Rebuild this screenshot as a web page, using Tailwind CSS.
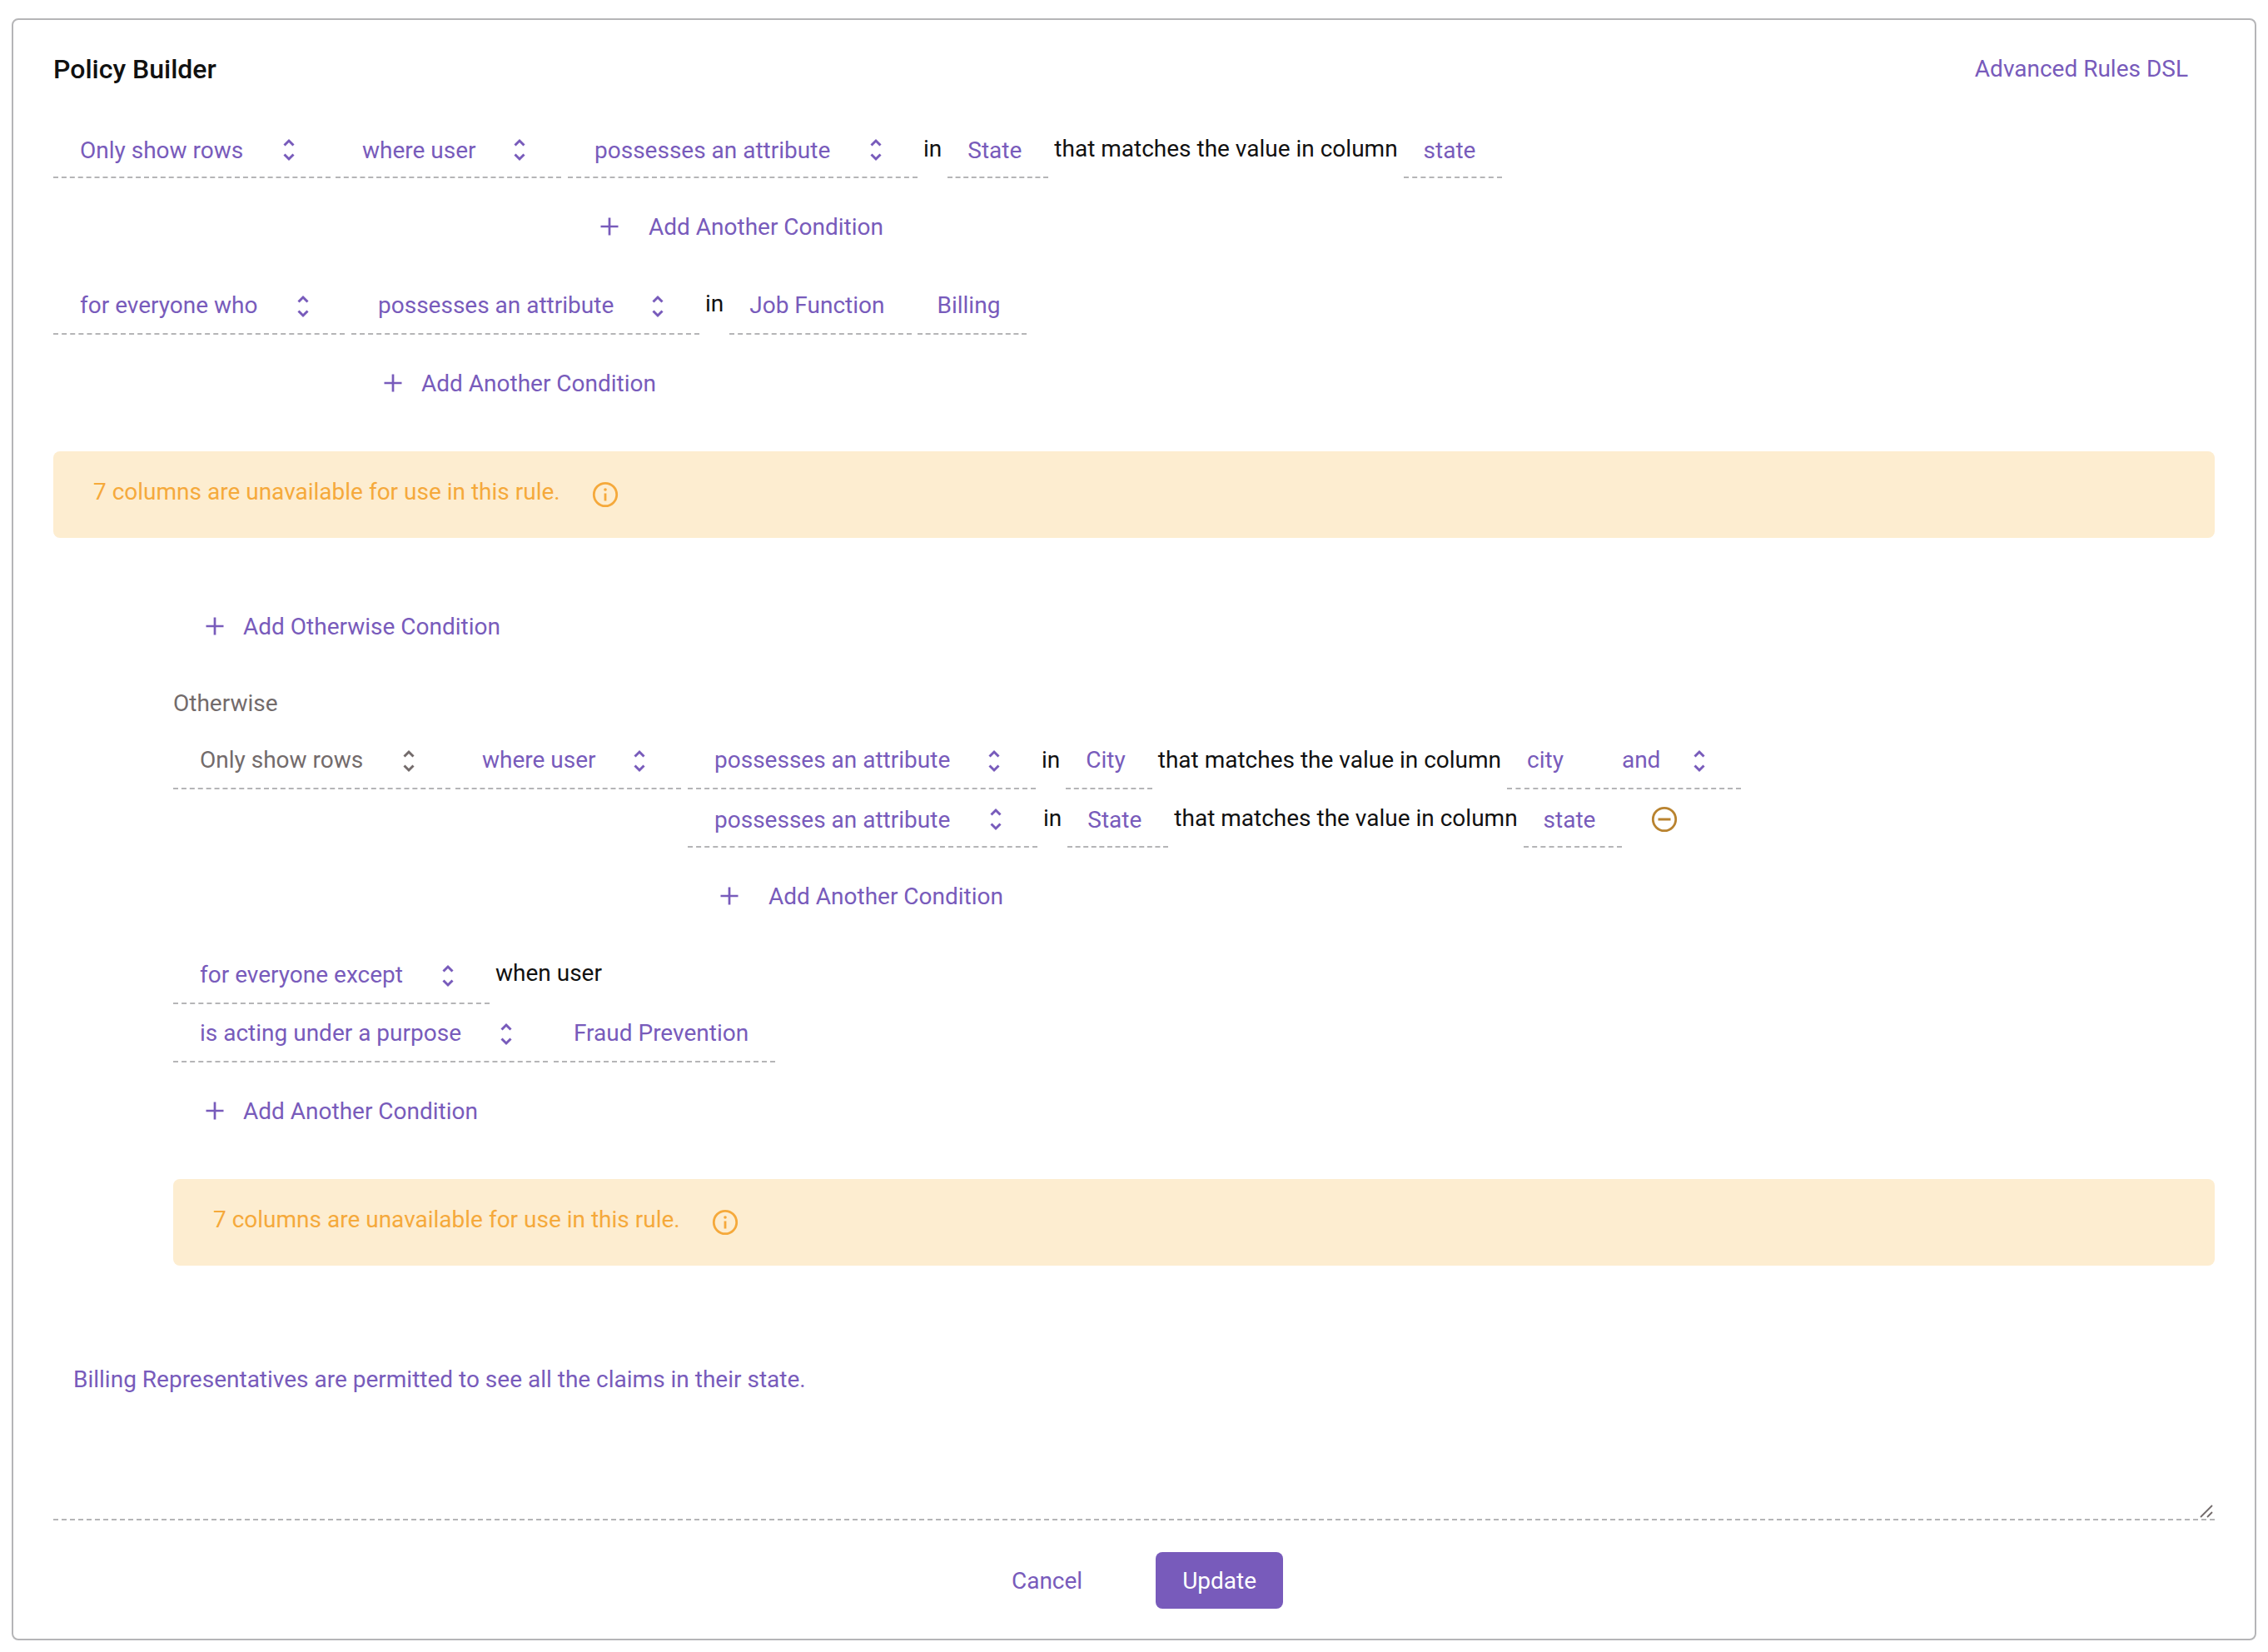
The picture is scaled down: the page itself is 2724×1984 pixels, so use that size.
<!DOCTYPE html>
<html lang="en">
<head>
<meta charset="utf-8">
<title>Policy Builder</title>
<script src="https://cdn.jsdelivr.net/npm/@tailwindcss/browser@4"></script>
</head>
<body class="bg-white px-[14px] pt-[22px] pb-[14px] font-[Roboto,sans-serif] text-[28px] leading-[34px] text-[#111111]">
<svg class="hidden" aria-hidden="true">
  <symbol id="updown" viewBox="0 0 14 28"><path d="M1.500 8.500 7 3l5.500 5.500M1.500 19.500 7 25l5.500-5.500" fill="none" stroke="currentColor" stroke-width="3"/></symbol>
  <symbol id="plus" viewBox="0 0 24 24"><path d="M12 1.500v21M1.500 12h21" fill="none" stroke="currentColor" stroke-width="2.700"/></symbol>
  <symbol id="info" viewBox="0 0 32 32"><circle cx="16" cy="16" r="13.700" fill="none" stroke="currentColor" stroke-width="2.800"/><path d="M16 14.500v9" stroke="currentColor" stroke-width="2.800"/><circle cx="16" cy="10" r="1.800" fill="currentColor"/></symbol>
  <symbol id="minus" viewBox="0 0 32 32"><circle cx="16" cy="16" r="13.700" fill="none" stroke="currentColor" stroke-width="2.800"/><path d="M8.500 16h15" stroke="currentColor" stroke-width="3"/></symbol>
</svg>
<main class="rounded-lg border-2 border-[#b5b5b7] px-12 pt-[39px] pb-9">
  <header class="flex items-center justify-between">
    <h1 class="text-[32px] leading-10 font-medium">Policy Builder</h1>
    <a href="#dsl" class="px-8 text-[#785bbb]">Advanced Rules DSL</a>
  </header>

  <form class="mt-[41px]">
    <section class="text-[#785bbb]">
      <div class="flex gap-2">
        <div class="flex gap-1.5">
          <label class="grid h-[70px] items-center"><select aria-label="Row action" class="col-start-1 row-start-1 h-[70px] appearance-none border-b-2 border-dashed border-[#b5b5b7] pt-5 pb-4 pl-8 pr-[104px]"><option>Only show rows</option></select><svg class="pointer-events-none col-start-1 row-start-1 mt-0.5 mr-[43px] h-7 w-3.5 justify-self-end"><use href="#updown"/></svg></label>
          <label class="grid h-[70px] items-center"><select aria-label="Subject" class="col-start-1 row-start-1 h-[70px] appearance-none border-b-2 border-dashed border-[#b5b5b7] pt-5 pb-4 pl-8 pr-[102px]"><option>where user</option></select><svg class="pointer-events-none col-start-1 row-start-1 mt-0.5 mr-[43px] h-7 w-3.5 justify-self-end"><use href="#updown"/></svg></label>
        </div>
        <div>
          <div class="flex gap-[7px]">
            <label class="grid h-[70px] items-center"><select aria-label="Condition" class="col-start-1 row-start-1 h-[70px] appearance-none border-b-2 border-dashed border-[#b5b5b7] pt-5 pb-4 pl-8 pr-[104px]"><option>possesses an attribute</option></select><svg class="pointer-events-none col-start-1 row-start-1 mt-0.5 mr-[43px] h-7 w-3.5 justify-self-end"><use href="#updown"/></svg></label>
            <span class="pt-[18px] text-[#111111]">in</span>
            <button type="button" class="h-[70px] border-b-2 border-dashed border-[#b5b5b7] pt-5 pb-4 pl-6 pr-8">State</button>
            <span class="pt-[18px] text-[#111111]">that matches the value in column</span>
            <button type="button" class="h-[70px] border-b-2 border-dashed border-[#b5b5b7] pt-5 pb-4 pl-6 pr-8">state</button>
          </div>
          <button type="button" class="mt-6 flex h-[68px] items-center gap-[35px] pt-0.5 pl-[38px]"><svg class="mb-0.5 size-6"><use href="#plus"/></svg>Add Another Condition</button>
        </div>
      </div>

      <div class="mt-[26px] flex gap-2">
        <label class="grid h-[70px] items-center self-start"><select aria-label="Audience" class="col-start-1 row-start-1 h-[70px] appearance-none border-b-2 border-dashed border-[#b5b5b7] py-[18px] pl-8 pr-[104px]"><option>for everyone who</option></select><svg class="pointer-events-none col-start-1 row-start-1 mt-0.5 mr-[43px] h-7 w-3.5 justify-self-end"><use href="#updown"/></svg></label>
        <div>
          <div class="flex gap-[7px]">
            <label class="grid h-[70px] items-center"><select aria-label="Condition" class="col-start-1 row-start-1 h-[70px] appearance-none border-b-2 border-dashed border-[#b5b5b7] py-[18px] pl-8 pr-[102px]"><option>possesses an attribute</option></select><svg class="pointer-events-none col-start-1 row-start-1 mt-0.5 mr-[43px] h-7 w-3.5 justify-self-end"><use href="#updown"/></svg></label>
            <span class="pt-4 text-[#111111]">in</span>
            <button type="button" class="h-[70px] border-b-2 border-dashed border-[#b5b5b7] py-[18px] pl-6 pr-8">Job Function</button>
            <button type="button" class="h-[70px] border-b-2 border-dashed border-[#b5b5b7] py-[18px] pl-6 pr-8">Billing</button>
          </div>
          <button type="button" class="mt-6 flex h-[68px] items-center gap-[22px] pt-0.5 pl-[38px]"><svg class="mb-0.5 size-6"><use href="#plus"/></svg>Add Another Condition</button>
        </div>
      </div>

      <div role="status" class="mt-12 flex h-[104px] items-start gap-[38px] rounded-lg bg-[#fdedd0] px-12 pt-8 text-[#f5a93b]">
        <p>7 columns are unavailable for use in this rule.</p>
        <svg class="mt-1 size-8"><use href="#info"/></svg>
      </div>
    </section>

    <section class="mt-[72px] ml-36 text-[#785bbb]">
      <button type="button" class="flex h-[68px] items-center gap-[22px] pt-0.5 pl-[38px]"><svg class="mb-0.5 size-6"><use href="#plus"/></svg>Add Otherwise Condition</button>
      <h2 class="mt-[42px] text-[#736b6b]">Otherwise</h2>

      <div class="mt-4 flex gap-2">
        <div class="flex gap-1.5">
          <label class="grid h-[70px] items-center text-[#736b6b]"><select aria-label="Row action" class="col-start-1 row-start-1 h-[70px] appearance-none border-b-2 border-dashed border-[#b5b5b7] py-[18px] pl-8 pr-[104px]"><option>Only show rows</option></select><svg class="pointer-events-none col-start-1 row-start-1 mt-0.5 mr-[43px] h-7 w-3.5 justify-self-end"><use href="#updown"/></svg></label>
          <label class="grid h-[70px] items-center"><select aria-label="Subject" class="col-start-1 row-start-1 h-[70px] appearance-none border-b-2 border-dashed border-[#b5b5b7] py-[18px] pl-8 pr-[102px]"><option>where user</option></select><svg class="pointer-events-none col-start-1 row-start-1 mt-0.5 mr-[43px] h-7 w-3.5 justify-self-end"><use href="#updown"/></svg></label>
        </div>
        <div>
          <div class="flex gap-[7px]">
            <label class="grid h-[70px] items-center"><select aria-label="Condition" class="col-start-1 row-start-1 h-[70px] appearance-none border-b-2 border-dashed border-[#b5b5b7] py-[18px] pl-8 pr-[102px]"><option>possesses an attribute</option></select><svg class="pointer-events-none col-start-1 row-start-1 mt-0.5 mr-[43px] h-7 w-3.5 justify-self-end"><use href="#updown"/></svg></label>
            <span class="pt-[18px] text-[#111111]">in</span>
            <button type="button" class="h-[70px] border-b-2 border-dashed border-[#b5b5b7] py-[18px] pl-6 pr-8">City</button>
            <span class="pt-[18px] text-[#111111]">that matches the value in column</span>
            <div class="flex gap-1.5">
              <button type="button" class="h-[70px] border-b-2 border-dashed border-[#b5b5b7] py-[18px] pl-6 pr-8">city</button>
              <label class="grid h-[70px] items-center"><select aria-label="Joined by" class="col-start-1 row-start-1 h-[70px] appearance-none border-b-2 border-dashed border-[#b5b5b7] py-[18px] pl-8 pr-24"><option>and</option></select><svg class="pointer-events-none col-start-1 row-start-1 mt-0.5 mr-[43px] h-7 w-3.5 justify-self-end"><use href="#updown"/></svg></label>
            </div>
          </div>
          <div class="flex gap-[7px]">
            <label class="grid h-[70px] items-center"><select aria-label="Condition" class="col-start-1 row-start-1 h-[70px] appearance-none border-b-2 border-dashed border-[#b5b5b7] pt-5 pb-4 pl-8 pr-[104px]"><option>possesses an attribute</option></select><svg class="pointer-events-none col-start-1 row-start-1 mt-0.5 mr-[43px] h-7 w-3.5 justify-self-end"><use href="#updown"/></svg></label>
            <span class="pt-[18px] text-[#111111]">in</span>
            <button type="button" class="h-[70px] border-b-2 border-dashed border-[#b5b5b7] pt-5 pb-4 pl-6 pr-8">State</button>
            <span class="pt-[18px] text-[#111111]">that matches the value in column</span>
            <button type="button" class="h-[70px] border-b-2 border-dashed border-[#b5b5b7] pt-5 pb-4 pl-6 pr-8">state</button>
            <button type="button" aria-label="Remove condition" class="flex h-[70px] items-center px-7 pt-0.5 text-[#b9832f]"><svg class="size-8"><use href="#minus"/></svg></button>
          </div>
          <button type="button" class="mt-6 flex h-[68px] items-center gap-[35px] pt-0.5 pl-[38px]"><svg class="mb-0.5 size-6"><use href="#plus"/></svg>Add Another Condition</button>
        </div>
      </div>

      <div class="mt-[26px] flex gap-[7px]">
        <label class="grid h-[70px] items-center"><select aria-label="Audience" class="col-start-1 row-start-1 h-[70px] appearance-none border-b-2 border-dashed border-[#b5b5b7] py-[18px] pl-8 pr-[104px]"><option>for everyone except</option></select><svg class="pointer-events-none col-start-1 row-start-1 mt-0.5 mr-[43px] h-7 w-3.5 justify-self-end"><use href="#updown"/></svg></label>
        <span class="pt-4 text-[#111111]">when user</span>
      </div>
      <div class="flex gap-[7px]">
        <label class="grid h-[70px] items-center"><select aria-label="Condition" class="col-start-1 row-start-1 h-[70px] appearance-none border-b-2 border-dashed border-[#b5b5b7] py-[18px] pl-8 pr-[104px]"><option>is acting under a purpose</option></select><svg class="pointer-events-none col-start-1 row-start-1 mt-0.5 mr-[43px] h-7 w-3.5 justify-self-end"><use href="#updown"/></svg></label>
        <button type="button" class="h-[70px] border-b-2 border-dashed border-[#b5b5b7] py-[18px] pl-6 pr-8">Fraud Prevention</button>
      </div>
      <button type="button" class="mt-6 flex h-[68px] items-center gap-[22px] pt-0.5 pl-[38px]"><svg class="mb-0.5 size-6"><use href="#plus"/></svg>Add Another Condition</button>

      <div role="status" class="mt-12 flex h-[104px] items-start gap-[38px] rounded-lg bg-[#fdedd0] px-12 pt-8 text-[#f5a93b]">
        <p>7 columns are unavailable for use in this rule.</p>
        <svg class="mt-1 size-8"><use href="#info"/></svg>
      </div>
    </section>

    <div class="mt-24 grid">
      <textarea aria-label="Rationale" class="col-start-1 row-start-1 h-[210px] resize-none border-b-2 border-dashed border-[#b5b5b7] px-6 pt-6 text-[#785bbb]">Billing Representatives are permitted to see all the claims in their state.</textarea>
      <svg class="pointer-events-none col-start-1 row-start-1 mr-0.5 mb-[3px] size-4 self-end justify-self-end" viewBox="0 0 16 16"><path d="M1 15 15 1M9 15l6-6" fill="none" stroke="#736b6b" stroke-width="1.800"/></svg>
    </div>

    <div class="mt-[38px] flex justify-center gap-14">
      <button type="button" class="h-[68px] px-8 pt-0.5 text-[#785bbb]">Cancel</button>
      <button type="submit" class="h-[68px] rounded-lg bg-[#785bbb] px-8 pt-0.5 text-white">Update</button>
    </div>
  </form>
</main>
</body>
</html>
